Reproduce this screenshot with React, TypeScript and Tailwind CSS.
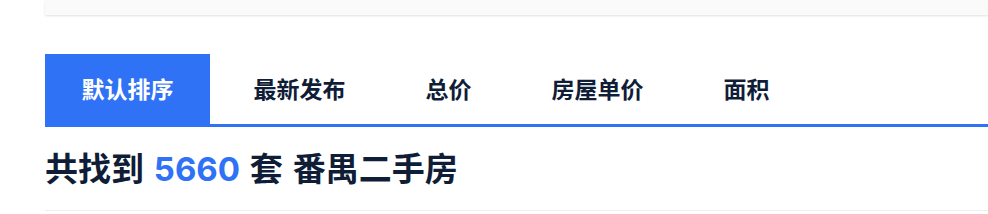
import React from "react";

const tabs = ["默认排序", "最新发布", "总价", "房屋单价", "面积"];

export default function App() {
  return (
    <div
      className="w-[988px] h-[214px] bg-white pl-[45px] overflow-hidden"
      style={{ fontFamily: 'Inter, "Noto Sans CJK SC", sans-serif' }}
    >
      {/* top filter panel edge */}
      <div className="h-[15px] bg-[#fafafa] shadow-[0_1px_2px_rgba(0,0,0,0.12)]" />

      {/* sort tabs */}
      <div className="mt-[39px] flex gap-[7px] border-b-[3px] border-[#3072f6]">
        {tabs.map((t, i) => (
          <div
            key={t}
            className={
              i === 0
                ? "h-[70px] px-[36.5px] pt-[3px] flex items-center text-[23px] font-bold bg-[#3072f6] text-white"
                : "h-[70px] px-[36.5px] pt-[3px] flex items-center text-[23px] font-bold text-[#101d37]"
            }
          >
            {t}
          </div>
        ))}
      </div>

      {/* result count */}
      <div className="h-[84px] pt-[3px] flex items-center border-b border-[#eeeeee] text-[33px] font-bold text-[#101d37] whitespace-pre [word-spacing:2px]">
        共找到 <span className="text-[#3072f6]">5660</span> 套 番禺二手房
      </div>
    </div>
  );
}
